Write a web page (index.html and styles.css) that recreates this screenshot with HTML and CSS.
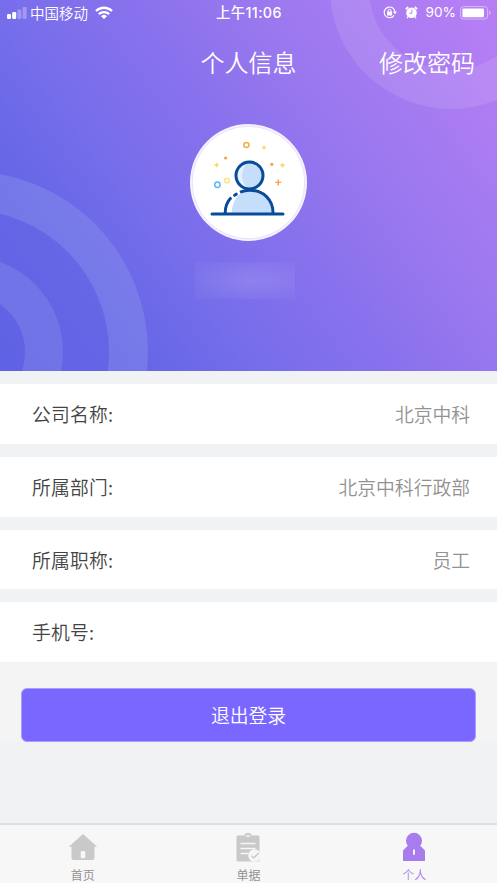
FILE: index.html
```html
<!DOCTYPE html>
<html lang="zh-CN">
<head>
<meta charset="utf-8">
<title>个人信息</title>
<link rel="stylesheet" href="styles.css">
</head>
<body>
<div class="app">
  <header class="hero">
    <svg class="rings" viewBox="0 0 497 371" fill="none" stroke="#fff" aria-hidden="true">
      <circle cx="-33" cy="352" r="161.5" stroke-width="39" stroke="#a2aeee" stroke-opacity=".25"/>
      <circle cx="-33" cy="352" r="77" stroke-width="38" stroke="#a2aeee" stroke-opacity=".22"/>
      <circle cx="451" cy="-12" r="101.5" stroke-width="39" stroke-opacity=".1"/>
    </svg>
    <div class="status">
      <div class="status-left">
        <svg class="signal" width="20" height="12" viewBox="0 0 20 12" fill="#fff">
          <rect y="7" width="4" height="5" rx="1.2"/>
          <rect x="5.2" y="5" width="4" height="7" rx="1.2"/>
          <rect x="10.4" y="2.5" width="4" height="9.5" rx="1.2" opacity=".3"/>
          <rect x="15.6" width="4" height="12" rx="1.2" opacity=".3"/>
        </svg>
        <span class="carrier">中国移动</span>
        <svg class="wifi" width="18" height="13" viewBox="0 0 18 13" fill="none" stroke="#fff" stroke-width="2.4">
          <path d="M1 5a11.500 11.500 0 0 1 16 0M3.800 8.200a7.500 7.500 0 0 1 10.400 0"/>
          <path d="M6 10.300a4.300 4.300 0 0 1 6 0L9 13z" fill="#fff" stroke="none"/>
        </svg>
      </div>
      <span class="time">上午11:06</span>
      <div class="status-right">
        <svg class="lock" width="14" height="13" viewBox="0 0 14 13" fill="none" stroke="#fff">
          <path d="M11.100 9.400a5.400 5.400 0 1 1 .9-3.400M12 6.300v1.300" stroke-width="1.100"/>
          <path d="M9.900 5.500h4L12 8.300z" fill="#fff" stroke="none"/>
          <rect x="4.100" y="5.600" width="5" height="3.800" rx=".5" fill="#fff" stroke="none"/>
          <path d="M5.100 5.900V4.800a1.500 1.500 0 0 1 3 0v1.100"/>
        </svg>
        <svg class="alarm" width="13" height="13" viewBox="0 0 13 13" fill="none" stroke="#fff">
          <circle cx="6.500" cy="6.700" r="5.300" fill="#fff" stroke="none"/>
          <path d="M.8 3.200 3.200 1M12.200 3.200 9.800 1" stroke-width="1.700"/>
          <path d="m3 10.500-1 1.600M10 10.500l1 1.600" stroke-width="1.300"/>
          <path d="M6.900 3.800v3.500H4.400" stroke="#a779f0" stroke-width=".9"/>
        </svg>
        <span class="percent">90%</span>
        <svg class="battery" width="31" height="14" viewBox="0 0 31 14" fill="#fff">
          <rect x=".6" y=".6" width="27" height="12.400" rx="3" fill="none" stroke="#fff" stroke-opacity=".45"/>
          <rect x="2.400" y="2.400" width="21.600" height="8.800" rx="1.200"/>
          <path d="M29.100 4.800q1.600.6 1.600 2t-1.600 2z" opacity=".45"/>
        </svg>
      </div>
    </div>
    <div class="title-bar">
      <h1 class="title">个人信息</h1>
      <a class="password">修改密码</a>
    </div>
    <div class="avatar">
      <svg width="117" height="117" viewBox="0 0 117 117" fill="none">
        <circle cx="58.500" cy="58.500" r="58.500" fill="#f6f2fd"/>
        <circle cx="58.500" cy="58.500" r="56.300" fill="#fff" stroke="#e4def4" stroke-width=".9"/>
        <path d="M41.500 89c1-13 7-22 18-22 13 0 22 9 22 22z" fill="#c5defc"/>
        <circle cx="59.500" cy="51.500" r="13.500" fill="#c5defc"/>
        <path d="M56.500 39.500q-9 12 0 24-9-2-9.500-12t9.500-12z" fill="#e4f0fe"/>
        <circle cx="59.500" cy="51.500" r="13.500" stroke="#084b98" stroke-width="3"/>
        <path d="M35.200 89q0-9.500 6-15.500M50 68.200q5-2 9.500-2c14 0 23.500 9.500 23.500 22.800" stroke="#084b98" stroke-width="3"/>
        <path d="m44.600 71.300 1.700-1.100" stroke="#084b98" stroke-width="3" stroke-linecap="round"/>
        <path d="M22 90h71" stroke="#084b98" stroke-width="3" stroke-linecap="round"/>
        <circle cx="56.400" cy="21" r="2.500" stroke="#f4ad4b" stroke-width="1.600"/>
        <circle cx="27.400" cy="60.700" r="2.700" stroke="#5fb5ef" stroke-width="1.500"/>
        <circle cx="37" cy="56.500" r="2.300" stroke="#fae58a" stroke-width="1.600"/>
        <circle cx="35.600" cy="34" r="1.600" fill="#f0a54c"/>
        <circle cx="81.800" cy="40.300" r="1.600" fill="#f0a54c"/>
        <path d="m74 21.500 2 2-2 2-2-2z" fill="#f3df45"/>
        <path d="M26.600 38.800v4.400M24.400 41h4.400M92.500 39v4.600M90.200 41.300h4.600" stroke="#f3df55" stroke-width="1.400"/>
        <path d="M88.300 55.400v6M85.300 58.400h6" stroke="#f3a34d" stroke-width="1.400"/>
      </svg>
    </div>
    <div class="name-mask"></div>
  </header>

  <main class="content">
    <dl class="info">
      <div class="row"><dt>公司名称:</dt><dd>北京中科</dd></div>
      <div class="row"><dt>所属部门:</dt><dd>北京中科行政部</dd></div>
      <div class="row"><dt>所属职称:</dt><dd>员工</dd></div>
      <div class="row"><dt>手机号:</dt><dd></dd></div>
    </dl>
    <div class="actions"><button class="logout">退出登录</button></div>
  </main>

  <nav class="tabs">
    <a class="tab">
      <svg width="30" height="30" viewBox="0 0 30 30" fill="#c9c9c9">
        <path d="M15 2 .8 14.800h2.700V26q0 2 2 2h19q2 0 2-2V14.800h2.700z"/>
        <rect x="12.700" y="19" width="4.600" height="7.300" rx="1" fill="#f7f7f7"/>
      </svg>
      <span>首页</span>
    </a>
    <a class="tab">
      <svg width="30" height="30" viewBox="0 0 30 30" fill="none">
        <path d="M5 3.500h6Q12 .8 15 .8t4 2.700h6q1.500 0 1.500 1.500v23q0 1.500-1.500 1.500H5Q3.500 29.500 3.500 28V5Q3.500 3.500 5 3.500z" fill="#c9c9c9"/>
        <path d="M12.600 4.800a2.500 2.500 0 0 1 4.800 0z" fill="#f6f6f6"/>
        <path d="M7.500 11.500h15M7.500 16.500h15M7.500 21.500h8" stroke="#f6f6f6" stroke-width="1.500"/>
        <circle cx="21.500" cy="23.500" r="6.300" fill="#f6f6f6"/>
        <path d="m18.400 23.700 2.300 2.300 5-5" stroke="#c3c3c3" stroke-width="1.200"/>
      </svg>
      <span>单据</span>
    </a>
    <a class="tab active">
      <svg width="30" height="30" viewBox="0 0 30 30" fill="#a97ced">
        <circle cx="15" cy="8.800" r="8"/>
        <path d="M9.500 13 4 18.500V29h22V18.500L20.500 13z"/>
        <path d="M14 17.500h2v5.300h-2z" fill="#f8f2ff"/>
      </svg>
      <span>个人</span>
    </a>
  </nav>
</div>
</body>
</html>
```
FILE: styles.css
```css
* { box-sizing: border-box; }

body {
  margin: 0;
  font-family: "Noto Sans CJK SC", sans-serif;
  font-weight: 350;
}

.app {
  display: flex;
  flex-direction: column;
  height: 883px;
  background: #f1f2f4;
}

.hero {
  position: relative;
  display: flex;
  flex-direction: column;
  align-items: center;
  height: 371px;
  background: linear-gradient(54deg, #6062e5, #6466e6 18%, #786eeb 36%, #8971ed 52%, #9a78ef 68%, #b97ff5);
  color: #fff;
}

.rings {
  position: absolute;
  inset: 0;
  width: 100%;
  height: 100%;
}

.status {
  position: relative;
  display: grid;
  grid-template-columns: 1fr auto 1fr;
  align-items: center;
  width: 100%;
  height: 25px;
  padding: 0 6px 0 7px;
  font-size: 14.5px;
  line-height: 25px;
}

.status-left,
.status-right {
  display: flex;
  align-items: center;
}

.status-right { justify-content: flex-end; }
.signal { margin: 0 3px 0 0; }
.wifi { margin-left: 7px; }
.time { font-family: Inter, "Noto Sans CJK SC", sans-serif; font-weight: 500; font-size: 14.3px; letter-spacing: 0.4px; }
.time, .carrier { font-synthesis: none; }
.percent { margin: 0 4px 0 7px; font-family: Inter, sans-serif; font-weight: 400; font-size: 13.7px; }
.alarm { margin-left: 8px; }

.title-bar {
  position: relative;
  display: grid;
  grid-template-columns: 1fr auto 1fr;
  align-items: center;
  width: 100%;
  height: 72px;
  padding: 0 22px;
  font-size: 24px;
}

.title {
  grid-column: 2;
  margin: 0;
  font-size: inherit;
  font-weight: inherit;
}

.password { justify-self: end; }

.avatar {
  position: relative;
  width: 117px;
  height: 117px;
  margin-top: 27px;
}

.avatar svg { display: block; }

.name-mask {
  width: 100px;
  height: 37px;
  margin: 21px 7px 0 0;
  background: radial-gradient(ellipse at 55% 50%, rgb(255 255 255 / 0.13), rgb(255 255 255 / 0.03) 80%);
}

.content { flex: 1; }

.info { margin: 0; }

.row {
  display: flex;
  align-items: center;
  justify-content: space-between;
  height: 59.8px;
  margin-top: 13px;
  padding: 0 27px 0.8px 32px;
  background: #fff;
  font-size: 18.8px;
}

.row dt { color: #444; letter-spacing: 0.2px; }
.row dd { margin: 0; color: #929292; }

.actions {
  height: 80px;
  padding: 26px 21px 0;
  background: #f4f4f5;
}

.logout {
  display: block;
  width: 100%;
  height: 54px;
  padding: 0 0 1px;
  border: 1px solid #a99cfb;
  border-radius: 6px;
  background: #7a67ff;
  color: #fff;
  font: 350 18.8px "Noto Sans CJK SC", sans-serif;
}

.tabs {
  display: grid;
  grid-template-columns: repeat(3, 1fr);
  height: 60px;
  border-top: 2px solid #dedfe2;
  background: #f7f7f8;
}

.tab {
  display: flex;
  flex-direction: column;
  align-items: center;
  padding-top: 7px;
  color: #929292;
  font-size: 12px;
  font-weight: 400;
  line-height: 18px;
}

.tab span { margin-top: 4px; }
.active { color: #a97ced; font-weight: 350; }
```
